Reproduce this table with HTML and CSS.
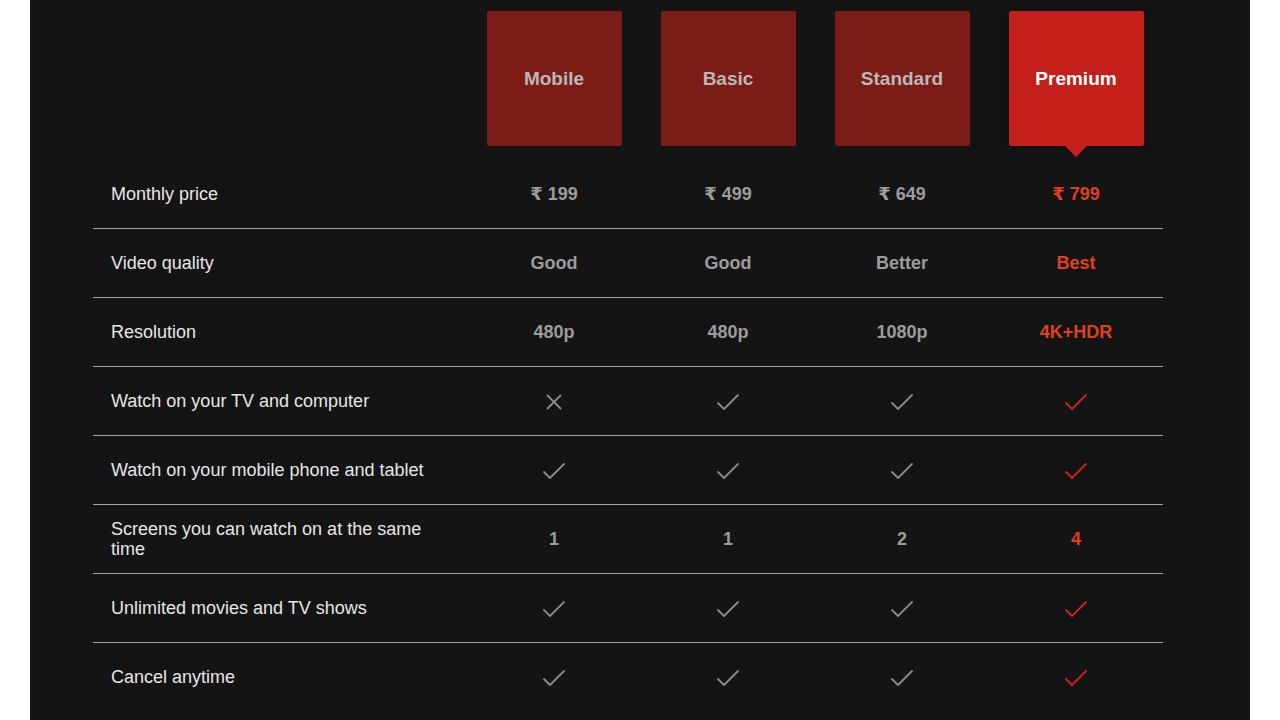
FILE: index.html
```html
<!DOCTYPE html>
<html lang="en">
<head>
<meta charset="utf-8">
<title>Plans</title>
<link rel="stylesheet" href="styles.css">
</head>
<body>
<div class="panel">
  <div class="plans">
    <div class="row head">
      <div class="label"></div>
      <div class="cell"><div class="plan-box">Mobile</div></div>
      <div class="cell"><div class="plan-box">Basic</div></div>
      <div class="cell"><div class="plan-box">Standard</div></div>
      <div class="cell"><div class="plan-box selected">Premium</div></div>
    </div>
    <div class="row">
      <div class="label">Monthly price</div>
      <div class="cell val">₹ 199</div>
      <div class="cell val">₹ 499</div>
      <div class="cell val">₹ 649</div>
      <div class="cell val sel">₹ 799</div>
    </div>
    <div class="row">
      <div class="label">Video quality</div>
      <div class="cell val">Good</div>
      <div class="cell val">Good</div>
      <div class="cell val">Better</div>
      <div class="cell val sel">Best</div>
    </div>
    <div class="row">
      <div class="label">Resolution</div>
      <div class="cell val">480p</div>
      <div class="cell val">480p</div>
      <div class="cell val">1080p</div>
      <div class="cell val sel">4K+HDR</div>
    </div>
    <div class="row">
      <div class="label">Watch on your TV and computer</div>
      <div class="cell val"><svg class="icon cross" viewBox="0 0 20 20"><path d="M3.5 4.5 L16.5 17.5 M16.5 4.5 L3.5 17.5"/></svg></div>
      <div class="cell val"><svg class="icon" viewBox="0 0 24 20"><path d="M2 12 L8 18 L22 4"/></svg></div>
      <div class="cell val"><svg class="icon" viewBox="0 0 24 20"><path d="M2 12 L8 18 L22 4"/></svg></div>
      <div class="cell val sel"><svg class="icon" viewBox="0 0 24 20"><path d="M2 12 L8 18 L22 4"/></svg></div>
    </div>
    <div class="row">
      <div class="label">Watch on your mobile phone and tablet</div>
      <div class="cell val"><svg class="icon" viewBox="0 0 24 20"><path d="M2 12 L8 18 L22 4"/></svg></div>
      <div class="cell val"><svg class="icon" viewBox="0 0 24 20"><path d="M2 12 L8 18 L22 4"/></svg></div>
      <div class="cell val"><svg class="icon" viewBox="0 0 24 20"><path d="M2 12 L8 18 L22 4"/></svg></div>
      <div class="cell val sel"><svg class="icon" viewBox="0 0 24 20"><path d="M2 12 L8 18 L22 4"/></svg></div>
    </div>
    <div class="row">
      <div class="label">Screens you can watch on at the same time</div>
      <div class="cell val">1</div>
      <div class="cell val">1</div>
      <div class="cell val">2</div>
      <div class="cell val sel">4</div>
    </div>
    <div class="row">
      <div class="label">Unlimited movies and TV shows</div>
      <div class="cell val"><svg class="icon" viewBox="0 0 24 20"><path d="M2 12 L8 18 L22 4"/></svg></div>
      <div class="cell val"><svg class="icon" viewBox="0 0 24 20"><path d="M2 12 L8 18 L22 4"/></svg></div>
      <div class="cell val"><svg class="icon" viewBox="0 0 24 20"><path d="M2 12 L8 18 L22 4"/></svg></div>
      <div class="cell val sel"><svg class="icon" viewBox="0 0 24 20"><path d="M2 12 L8 18 L22 4"/></svg></div>
    </div>
    <div class="row last">
      <div class="label">Cancel anytime</div>
      <div class="cell val"><svg class="icon" viewBox="0 0 24 20"><path d="M2 12 L8 18 L22 4"/></svg></div>
      <div class="cell val"><svg class="icon" viewBox="0 0 24 20"><path d="M2 12 L8 18 L22 4"/></svg></div>
      <div class="cell val"><svg class="icon" viewBox="0 0 24 20"><path d="M2 12 L8 18 L22 4"/></svg></div>
      <div class="cell val sel"><svg class="icon" viewBox="0 0 24 20"><path d="M2 12 L8 18 L22 4"/></svg></div>
    </div>
  </div>
</div>
</body>
</html>
```
FILE: styles.css
```css
html, body {
  margin: 0;
  padding: 0;
  background: #ffffff;
  height: 100%;
}
body {
  font-family: "Liberation Sans", Arial, "DejaVu Sans", sans-serif;
  overflow: hidden;
}
.panel {
  margin-left: 30px;
  width: 1220px;
  min-height: 720px;
  background: #141414;
  padding-left: 63px;
  box-sizing: border-box;
}
.plans {
  width: 1070px;
}
.row {
  display: grid;
  grid-template-columns: 374px repeat(4, 174px);
  height: 68px;
  border-bottom: 1px solid #a3a3a3;
  align-items: center;
}
.row.head {
  height: 160px;
  border-bottom: none;
  align-items: start;
}
.row.last {
  border-bottom: none;
}
.label {
  padding: 0 36px 0 18px;
  color: #e6e6e6;
  font-size: 18px;
  line-height: 20px;
}
.cell {
  display: flex;
  justify-content: center;
  align-items: center;
}
.plan-box {
  position: relative;
  margin-top: 11px;
  width: 135px;
  height: 135px;
  border-radius: 2px;
  background: #7b1c17;
  color: #b9b9b9;
  font-size: 19px;
  font-weight: bold;
  display: flex;
  align-items: center;
  justify-content: center;
}
.plan-box.selected {
  background: #c41f1a;
  color: #ffffff;
  box-shadow: 0 2px 6px rgba(0, 0, 0, 0.4);
}
.plan-box.selected::after {
  content: "";
  position: absolute;
  left: 50%;
  top: 135px;
  margin-left: -11px;
  border-top: 11px solid #c41f1a;
  border-left: 11px solid transparent;
  border-right: 11px solid transparent;
}
.val {
  color: #9c9c9c;
  font-size: 18px;
  font-weight: bold;
  line-height: 20px;
}
.val.sel {
  color: #e0401f;
}
.icon {
  width: 24px;
  height: 20px;
  fill: none;
  stroke: #8a8a8a;
  stroke-width: 1.8;
  stroke-linecap: round;
  stroke-linejoin: round;
}
.icon.cross {
  width: 20px;
}
.val.sel .icon {
  stroke: #cf2427;
}
```
